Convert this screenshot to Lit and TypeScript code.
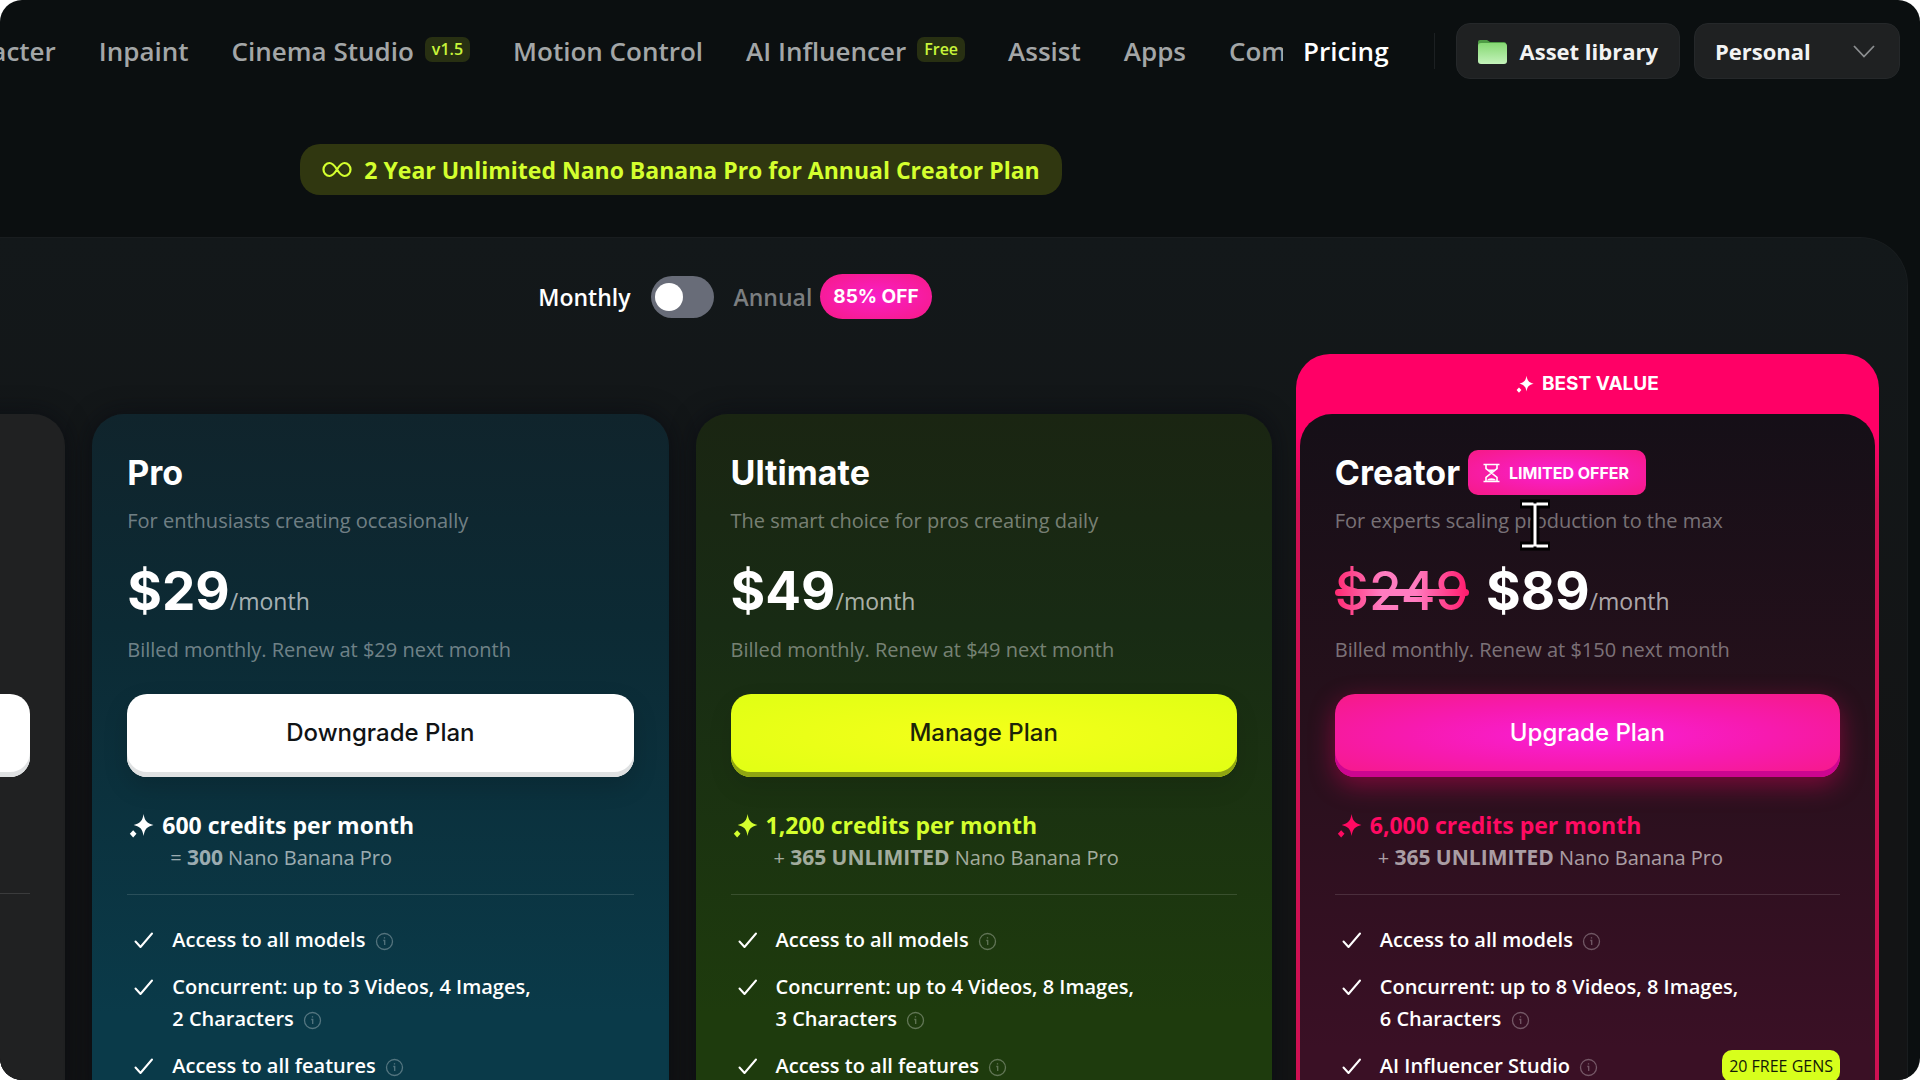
import { LitElement, html, css, svg, nothing } from "lit";
import { customElement, property, state } from "lit/decorators.js";
import { classMap } from "lit/directives/class-map.js";

interface Feature {
  text: string;
  tag?: string;
}

interface Plan {
  id: "pro" | "ultimate" | "creator";
  name: string;
  offer?: string;
  pitch: string;
  oldPrice?: string;
  price: string;
  billing: string;
  action: string;
  credits: string;
  sign: string;
  amount: string;
  features: Feature[];
}

const PLANS: Plan[] = [
  {
    id: "pro",
    name: "Pro",
    pitch: "For enthusiasts creating occasionally",
    price: "$29",
    billing: "Billed monthly. Renew at $29 next month",
    action: "Downgrade Plan",
    credits: "600 credits per month",
    sign: "=",
    amount: "300",
    features: [
      { text: "Access to all models" },
      { text: "Concurrent: up to 3 Videos, 4 Images, 2 Characters" },
      { text: "Access to all features" },
    ],
  },
  {
    id: "ultimate",
    name: "Ultimate",
    pitch: "The smart choice for pros creating daily",
    price: "$49",
    billing: "Billed monthly. Renew at $49 next month",
    action: "Manage Plan",
    credits: "1,200 credits per month",
    sign: "+",
    amount: "365 UNLIMITED",
    features: [
      { text: "Access to all models" },
      { text: "Concurrent: up to 4 Videos, 8 Images, 3 Characters" },
      { text: "Access to all features" },
    ],
  },
  {
    id: "creator",
    name: "Creator",
    offer: "LIMITED OFFER",
    pitch: "For experts scaling production to the max",
    oldPrice: "$249",
    price: "$89",
    billing: "Billed monthly. Renew at $150 next month",
    action: "Upgrade Plan",
    credits: "6,000 credits per month",
    sign: "+",
    amount: "365 UNLIMITED",
    features: [
      { text: "Access to all models" },
      { text: "Concurrent: up to 8 Videos, 8 Images, 6 Characters" },
      { text: "AI Influencer Studio", tag: "20 FREE GENS" },
    ],
  },
];

const NAV: { label: string; badge?: string }[] = [
  { label: "Character" },
  { label: "Inpaint" },
  { label: "Cinema Studio", badge: "v1.5" },
  { label: "Motion Control" },
  { label: "AI Influencer", badge: "Free" },
  { label: "Assist" },
  { label: "Apps" },
  { label: "Community" },
];

const sparkle = (size: number) => html`
  <svg width=${size} height=${size} viewBox="0 0 24 24" fill="currentColor" aria-hidden="true">
    ${svg`<path d="M14 1C15 7.300 17 10 23.500 11.500C17 13 15 15.700 14 22C13 15.700 11 13 4.500 11.500C11 10 13 7.300 14 1Z"/>
    <path d="M4 16.500L7.200 20L4 23.500L0.800 20Z"/>`}
  </svg>`;

const check = html`
  <svg class="check" width="20" height="20" viewBox="0 0 20 20" fill="none" stroke="currentColor"
    stroke-width="2" stroke-linecap="round" stroke-linejoin="round" aria-hidden="true">
    <path d="M1.500 11.500L6.500 17L18 3.500" />
  </svg>`;

const info = html`
  <svg class="info" width="19" height="19" viewBox="0 0 19 19" fill="none" stroke="currentColor"
    stroke-width="1.300" aria-hidden="true">
    <circle cx="9.500" cy="9.500" r="8" />
    <path d="M8.300 8.500H9.700V13M9.500 5.300V6.600" />
  </svg>`;

const sansStack = css`"Open Sans", "Noto Sans", sans-serif`;
const displayStack = css`Inter, "Liberation Sans", sans-serif`;

@customElement("plan-card")
class PlanCard extends LitElement {
  @property({ attribute: false }) plan!: Plan;

  static styles = css`
    :host {
      display: block;
      color: #fff;
      font-family: ${sansStack};
    }
    h2, p, ul { margin: 0; padding: 0; }
    .card {
      box-sizing: border-box;
      height: 100%;
      padding: 36px 35px;
      border-radius: 32px;
    }
    .pro { background: linear-gradient(#10242c, #0c2a34 30%, #0a3a49 85%); }
    .ultimate { background: linear-gradient(#1a2512, #182b14 30%, #1e3b0d 85%); }
    .creator { background: linear-gradient(#150f17, #25101b 40%, #3a1025 90%); }
    .title { display: flex; align-items: center; gap: 8px; height: 45px; }
    h2 { font: 700 34px/44px ${displayStack}; }
    .offer {
      display: flex;
      align-items: center;
      gap: 9px;
      height: 45px;
      padding: 0 17px 0 15px;
      border-radius: 10px;
      background: radial-gradient(ellipse at center, #f91fd2, #f61a86);
      font: 700 16px/24px ${displayStack};
    }
    .muted { color: rgba(255, 255, 255, 0.42); font-size: 20px; line-height: 28px; }
    .pitch { margin-top: 12px; }
    .price { display: flex; align-items: baseline; margin-top: 24px; }
    .amount { font: 700 53px/64px ${displayStack}; }
    .old {
      position: relative;
      margin-right: 17px;
      font: 500 53px/64px ${displayStack};
      color: transparent;
      text-decoration: none;
      background: linear-gradient(90deg, #ff2a72, #ff7cc0 35%, #ff7cc0 60%, #ff1a6c);
      background-clip: text;
      -webkit-background-clip: text;
    }
    .old::after {
      content: "";
      position: absolute;
      left: 0;
      right: 0;
      top: 30px;
      height: 7px;
      border-radius: 4px;
      background: linear-gradient(90deg, #ff2a72, #ff7cc0 35%, #ff7cc0 60%, #ff1a6c);
    }
    .per { font-size: 23px; line-height: 32px; color: rgba(255, 255, 255, 0.65); }
    .billing { margin-top: 13px; }
    button {
      display: block;
      width: 100%;
      height: 83px;
      margin-top: 30px;
      padding: 0 0 5px;
      border: 0;
      border-radius: 20px;
      font: 500 24px/32px ${displayStack};
      cursor: pointer;
    }
    .pro button { background: #fff; color: #101315; box-shadow: inset 0 -5px #dfe1e2, 0 10px 24px rgba(0, 0, 0, 0.15); }
    .ultimate button {
      background: radial-gradient(ellipse at center, #f4ff1a, #e0ff14);
      color: #1c2408;
      box-shadow: inset 0 -5px #8fa512, 0 10px 24px rgba(0, 0, 0, 0.1);
    }
    .creator button {
      background: radial-gradient(ellipse at center, #f91fd8, #f71ab0 50%, #f61a86);
      color: #fff;
      box-shadow: inset 0 -6px #cc0690, 0 8px 26px rgba(255, 0, 102, 0.4);
    }
    .credits {
      display: flex;
      align-items: center;
      gap: 8px;
      margin-top: 32px;
      padding-left: 2px;
      font-size: 23px;
      font-weight: 700;
      line-height: 32px;
    }
    .ultimate .credits { color: #d4ff2e; }
    .creator .credits { color: #ff0a62; }
    .grant {
      margin-top: 2px;
      padding: 0 0 22px 43px;
      border-bottom: 1px solid rgba(255, 255, 255, 0.13);
      color: rgba(255, 255, 255, 0.6);
      font-size: 20px;
      line-height: 28px;
    }
    .grant b { font-size: 21px; }
    ul { display: grid; gap: 15px; margin-top: 29px; list-style: none; }
    li {
      display: flex;
      align-items: flex-start;
      padding-left: 7px;
      font-size: 20px;
      font-weight: 600;
      line-height: 32px;
    }
    .check { flex: none; margin: 6px 18px 0 0; }
    .text { max-width: 370px; }
    .info { margin-left: 4px; vertical-align: -4px; color: rgba(255, 255, 255, 0.3); }
    .tag {
      margin-left: auto;
      padding: 0 7px;
      border-radius: 10px;
      background: #d7ff1c;
      color: #141a08;
      font-size: 16px;
      font-weight: 400;
    }
  `;

  render() {
    const p = this.plan;
    return html`
      <article class=${classMap({ card: true, [p.id]: true })}>
        <div class="title">
          <h2>${p.name}</h2>
          ${p.offer
            ? html`<span class="offer">
                <svg width="17" height="20" viewBox="0 0 17 20" fill="none" stroke="currentColor" stroke-width="1.600" aria-hidden="true">
                  <path d="M0.500 1.500H16.500M0.500 18.500H16.500M3 1.500V5.500L8.500 10L14 5.500V1.500M3 18.500V14.500L8.500 10L14 14.500V18.500" />
                  <path d="M5 6.500H12L8.500 9.500ZM4 17.500C5 14.500 12 14.500 13 17.500Z" fill="currentColor" stroke="none" />
                </svg>${p.offer}</span>`
            : nothing}
        </div>
        <p class="pitch muted">${p.pitch}</p>
        <div class="price">
          ${p.oldPrice ? html`<s class="old">${p.oldPrice}</s>` : nothing}
          <span class="amount">${p.price}</span><span class="per">/month</span>
        </div>
        <p class="billing muted">${p.billing}</p>
        <button type="button">${p.action}</button>
        <div class="credits">${sparkle(25)}<span>${p.credits}</span></div>
        <p class="grant">${p.sign} <b>${p.amount}</b> Nano Banana Pro</p>
        <ul>
          ${p.features.map(
            (f) => html`<li>${check}<span class="text">${f.text}${info}</span>${f.tag ? html`<span class="tag">${f.tag}</span>` : nothing}</li>`
          )}
        </ul>
      </article>`;
  }
}

@customElement("app-root")
class AppRoot extends LitElement {
  @state() private annual = false;

  static styles = css`
    :host {
      display: block;
      background: #fff;
      font-family: ${sansStack};
      color: #fff;
    }
    .frame {
      position: relative;
      height: 100vh;
      overflow: hidden;
      border-radius: 22px;
      background: #0b0f10;
    }
    header {
      display: flex;
      align-items: center;
      height: 56px;
      padding: 23px 20px 0 0;
      font-size: 26px;
      font-weight: 600;
    }
    nav {
      display: flex;
      flex: 1 1 0;
      min-width: 0;
      gap: 43px;
      overflow: hidden;
    }
    nav a:first-child { margin-left: -68px; }
    a { display: flex; align-items: center; gap: 11px; color: #a3a6a7; text-decoration: none; white-space: nowrap; line-height: 36px; }
    .badge {
      margin-bottom: 4px;
      padding: 0 7px;
      border-radius: 7px;
      background: #283012;
      color: #c8f53a;
      font-size: 16px;
      line-height: 25px;
    }
    .pricing { margin-left: 20px; color: #fff; }
    .rule { width: 1px; height: 36px; margin: 0 21px 0 45px; background: #1c2022; }
    .tool {
      display: flex;
      align-items: center;
      box-sizing: border-box;
      height: 56px;
      border: 1px solid #25282a;
      border-radius: 14px;
      background: #1f2122;
      color: #f2f3f3;
      font: 700 22px/32px ${sansStack};
    }
    .library { gap: 13px; padding: 0 21px; margin-right: 14px; cursor: pointer; }
    .picker { position: relative; }
    .picker svg { position: absolute; right: 24px; pointer-events: none; }
    select {
      appearance: none;
      width: 204px;
      height: 100%;
      padding: 0 20px;
      border: 0;
      background: transparent;
      color: inherit;
      font: inherit;
    }
    main { margin: 65px 12px 0 -546px; }
    .promo {
      display: flex;
      align-items: center;
      gap: 12px;
      width: fit-content;
      box-sizing: border-box;
      height: 51px;
      margin: 0 auto;
      padding: 0 22px;
      border-radius: 20px;
      background: #303710;
      color: #d4ff2e;
      font-size: 23px;
      font-weight: 700;
    }
    .panel {
      margin-top: 42px;
      padding: 36px 32px 40px 35px;
      border: solid #191d1f;
      border-width: 1px 1px 0 0;
      border-radius: 48px;
      background: linear-gradient(#13181a, #131415 60%);
    }
    .period {
      display: grid;
      grid-template-columns: 1fr auto 1fr;
      align-items: center;
      column-gap: 20px;
      height: 45px;
      font-size: 23px;
      font-weight: 600;
    }
    .monthly { text-align: right; }
    .annual { display: flex; align-items: center; gap: 8px; color: #7b7e80; }
    .switch {
      appearance: none;
      display: flex;
      align-items: center;
      box-sizing: border-box;
      width: 63px;
      height: 42px;
      margin: 0;
      padding: 0 4px;
      border-radius: 21px;
      background: #686c78;
      cursor: pointer;
    }
    .switch::before { content: ""; width: 28px; height: 28px; border-radius: 50%; background: #fff; }
    .switch:checked { justify-content: flex-end; }
    .off {
      padding: 0 13px;
      border-radius: 23px;
      background: radial-gradient(ellipse at center, #f91fc8, #f61a86);
      color: #fff;
      font: 700 19px/45px ${displayStack};
    }
    .plans { display: grid; grid-template-columns: repeat(4, 1fr); column-gap: 27px; margin-top: 35px; }
    .basic, .plain { margin-top: 60px; border-radius: 32px; box-shadow: 0 0 24px rgba(6, 8, 16, 0.6); }
    .basic { box-sizing: border-box; padding: 280px 35px 0; background: #202122; }
    .basic-action { display: block; width: 100%; height: 83px; border: 0; border-radius: 20px; background: #fff; box-shadow: inset 0 -5px #dfe1e2; }
    .basic-line { height: 1px; margin-top: 116px; background: #3a3b3c; }
    .best {
      display: flex;
      flex-direction: column;
      margin: 0 -4px 0 -3px;
      padding: 0 4px;
      border-radius: 34px 34px 32px 32px;
      background: linear-gradient(#ff0066 80px, #cf1052 150px);
    }
    .ribbon {
      display: flex;
      align-items: center;
      justify-content: center;
      gap: 8px;
      height: 60px;
      font: 700 19px/28px ${displayStack};
    }
    .best plan-card { flex: 1; }
    .pointer { position: absolute; left: 1519px; top: 499px; pointer-events: none; }
  `;

  render() {
    const [pro, ultimate, creator] = PLANS;
    return html`
      <div class="frame">
        <header>
          <nav>
            ${NAV.map((n) => html`<a href="#">${n.label}${n.badge ? html`<span class="badge">${n.badge}</span>` : nothing}</a>`)}
          </nav>
          <a class="pricing" href="#">Pricing</a>
          <span class="rule"></span>
          <button type="button" class="tool library">
            <svg width="29" height="25" viewBox="0 0 29 25" aria-hidden="true">
              <defs>
                <linearGradient id="folder" x1="0" y1="0" x2="0" y2="1">
                  <stop offset="0" stop-color="#86d873" />
                  <stop offset="1" stop-color="#c4f3bb" />
                </linearGradient>
              </defs>
              <path d="M0 3Q0 1 2 1H9L12 3H26Q28 3 28 5V12H0Z" fill="#4f9c45" />
              <rect y="4" width="29" height="21" rx="3" fill="url(#folder)" />
            </svg>
            Asset library
          </button>
          <div class="tool picker">
            <select aria-label="Workspace"><option>Personal</option></select>
            <svg width="22" height="13" viewBox="0 0 22 13" fill="none" stroke="#8b8e90" stroke-width="1.800" aria-hidden="true">
              <path d="M1 1L11 11.500L21 1" />
            </svg>
          </div>
        </header>
        <main>
          <div class="promo">
            <svg width="30" height="17" viewBox="0 0 30 17" fill="none" stroke="currentColor" stroke-width="2.200" aria-hidden="true">
              <path d="M15 8.500C12.500 4.500 10.500 2 7.500 2A6 6.500 0 0 0 7.500 15C10.500 15 12.500 12.500 15 8.500C17.500 4.500 19.500 2 22.500 2A6 6.500 0 0 1 22.500 15C19.500 15 17.500 12.500 15 8.500Z" />
            </svg>
            2 Year Unlimited Nano Banana Pro for Annual Creator Plan
          </div>
          <section class="panel">
            <div class="period">
              <span class="monthly">Monthly</span>
              <input id="annual" class="switch" type="checkbox" role="switch" .checked=${this.annual}
                @change=${(e: Event) => (this.annual = (e.target as HTMLInputElement).checked)} />
              <label class="annual" for="annual">Annual <span class="off">85% OFF</span></label>
            </div>
            <div class="plans">
              <div class="basic">
                <button type="button" class="basic-action" aria-label="Downgrade Plan"></button>
                <div class="basic-line"></div>
              </div>
              <plan-card class="plain" .plan=${pro}></plan-card>
              <plan-card class="plain" .plan=${ultimate}></plan-card>
              <div class="best">
                <div class="ribbon">${sparkle(18)}<span>BEST VALUE</span></div>
                <plan-card .plan=${creator}></plan-card>
              </div>
            </div>
          </section>
        </main>
        <svg class="pointer" width="32" height="52" viewBox="0 0 32 52" fill="none" aria-hidden="true">
          <path d="M1 5H31M1 47H31M16 5V47" stroke="#000" stroke-width="9" />
          <path d="M3 5H29M3 47H29M16 5V47" stroke="#fff" stroke-width="3" />
          <path d="M14.500 3.500H17.500M14.500 48.500H17.500" stroke="#000" stroke-width="2" />
        </svg>
      </div>`;
  }
}
